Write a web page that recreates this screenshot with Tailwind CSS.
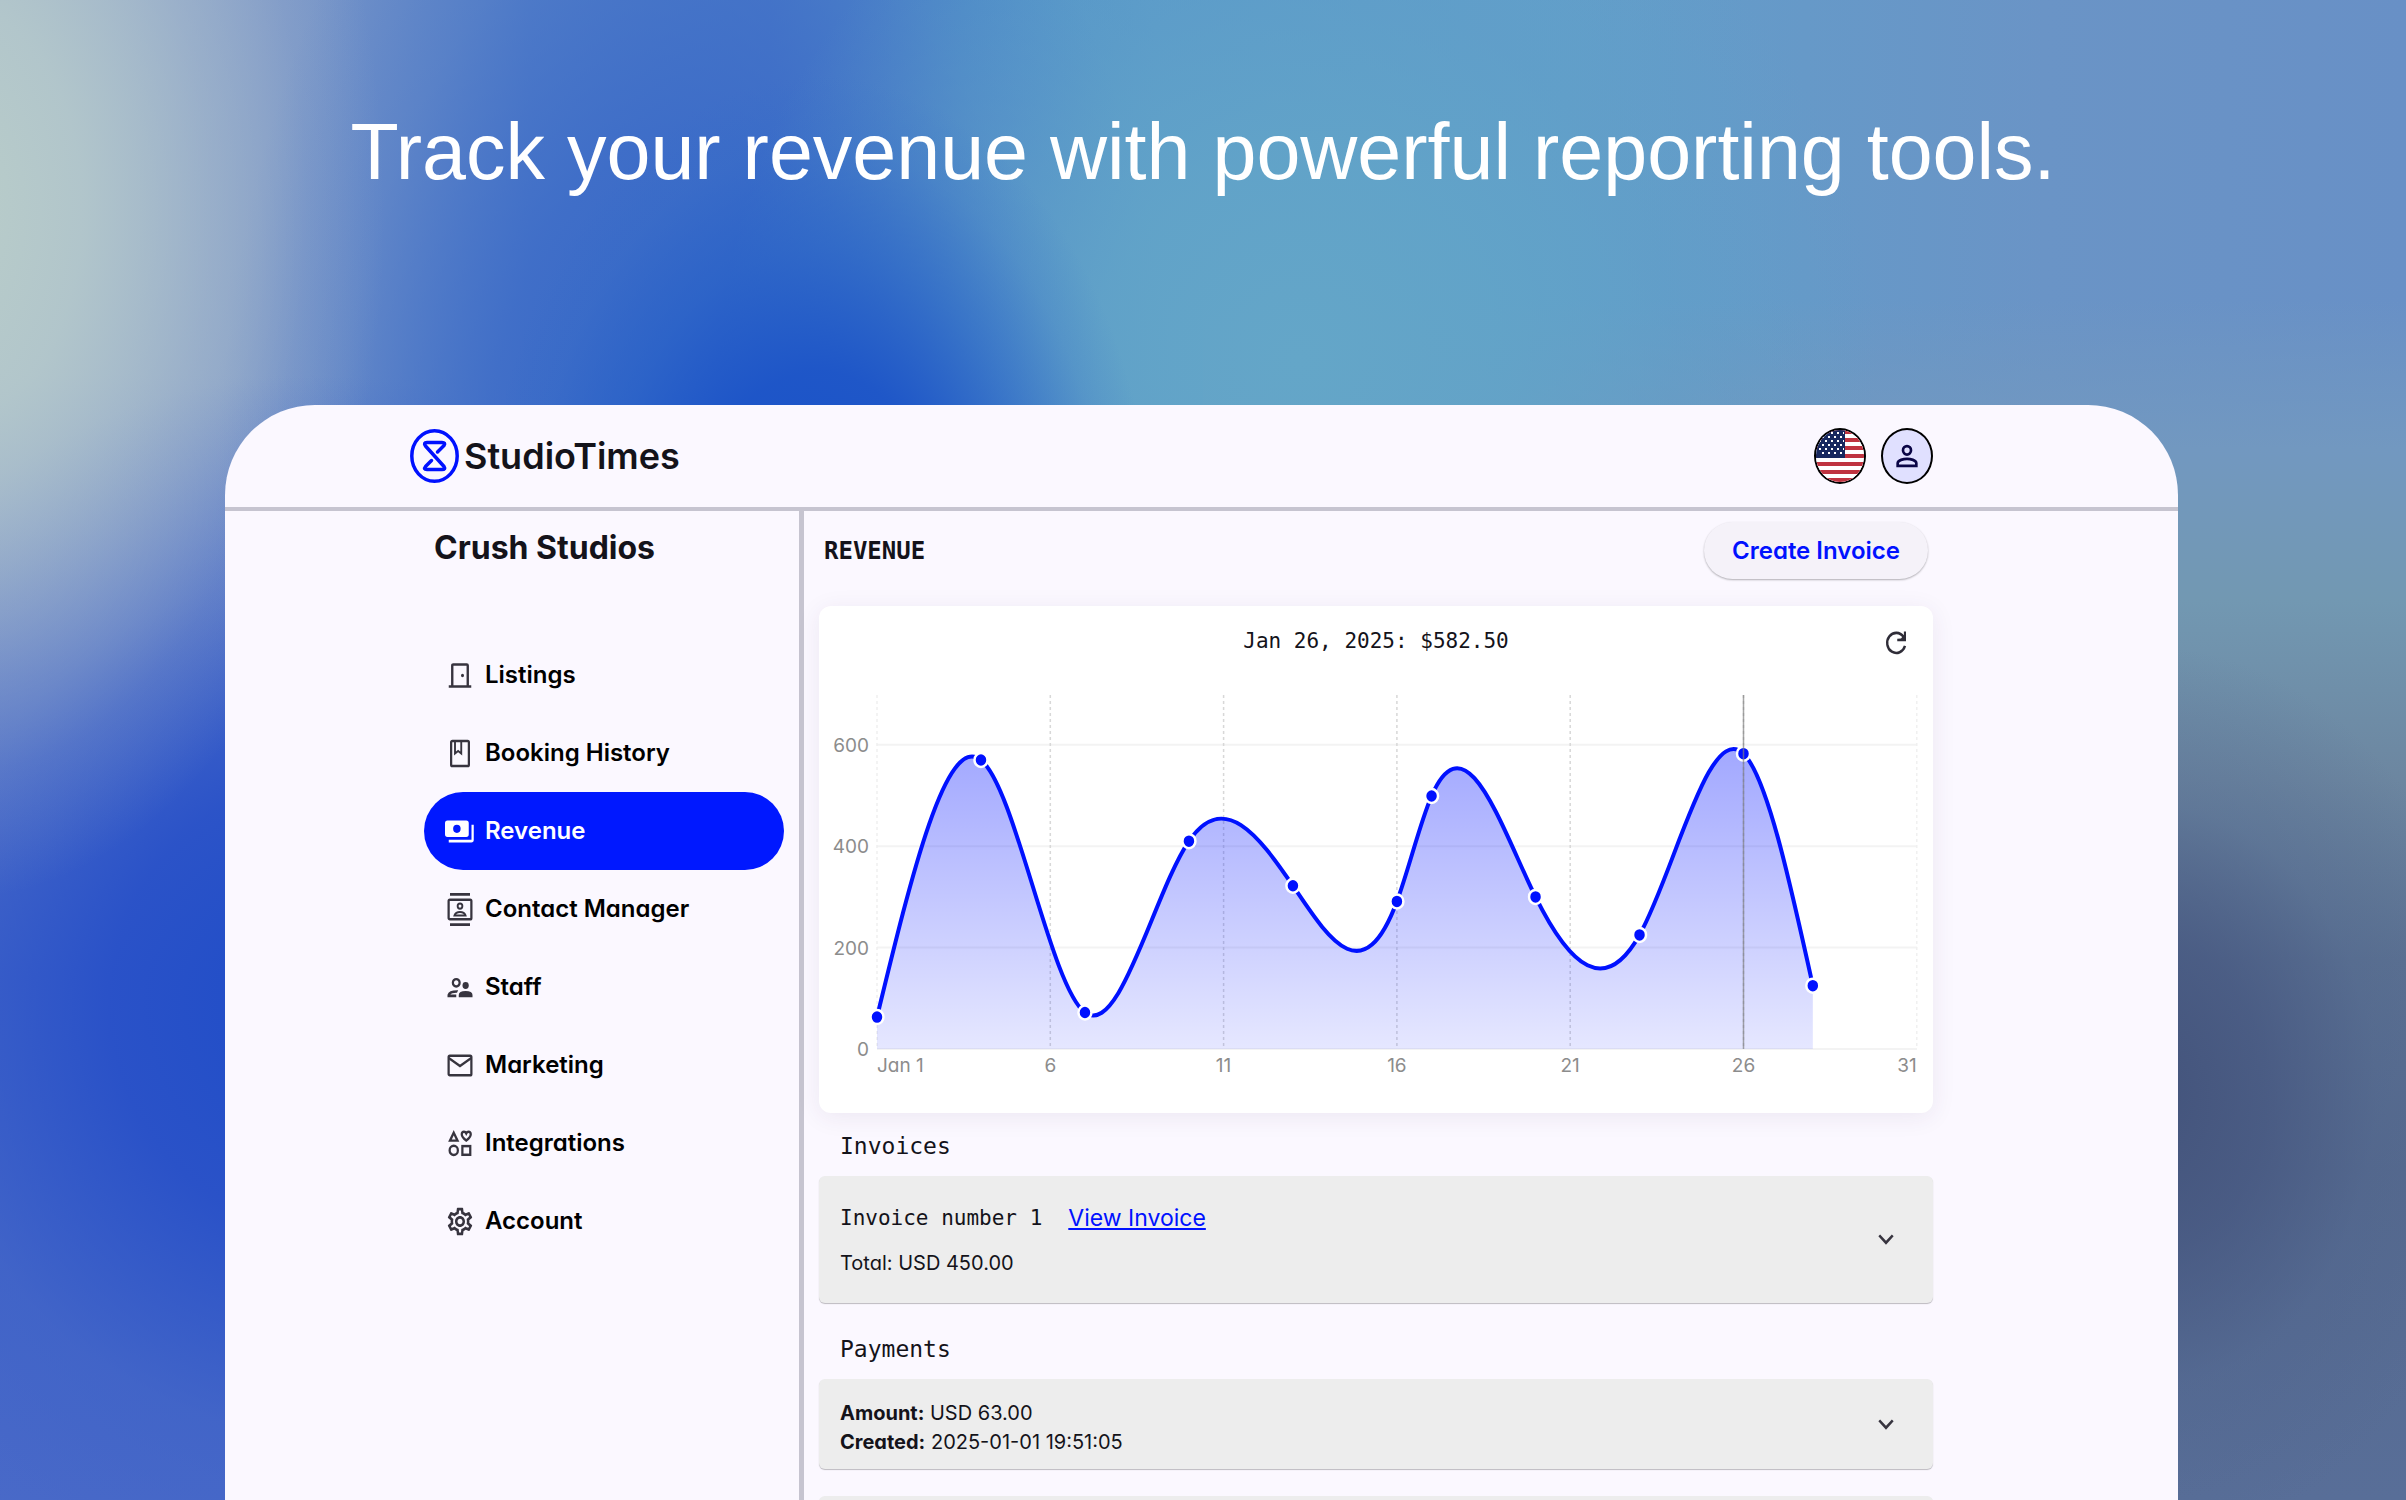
<!DOCTYPE html>
<html lang="en">
<head>
    <meta charset="UTF-8">
    <meta name="viewport" content="width=device-width, initial-scale=1.0">
    <title>StudioTimes - Revenue</title>
    <script src="https://cdn.jsdelivr.net/npm/@tailwindcss/browser@4"></script>
    <style>
        /* soft mesh backdrop, first layer is on top */
        .backdrop {
            background:
                radial-gradient(ellipse 18% 46% at -2% 14%, #b9cdc9 0%, #b5c9cbdd 30%, #a9bccb88 60%, #9fb2cb33 82%, #9fb2cb00 100%),
                radial-gradient(ellipse 15% 30% at 89% 73%, #43537b 0%, #455680bb 35%, #4d628c55 65%, #54688f00 100%),
                radial-gradient(ellipse 14% 33% at 34% 38%, #1850c8 0%, #1c54c8ee 40%, #2560c899 65%, #2f6ac833 86%, #3f72c800 100%),
                radial-gradient(ellipse 24% 38% at 54% 24%, #64a6c8 0%, #62a4c8dd 35%, #60a0c877 65%, #5f9ec800 100%),
                radial-gradient(ellipse 20% 56% at 29% 34%, #3464c8 0%, #3868c8bb 45%, #4472c855 75%, #4a78c800 100%),
                radial-gradient(ellipse 24% 42% at 13% 67%, #1f4dc8 0%, #264fc8dd 35%, #3a60c877 68%, #4a6cc800 100%),
                linear-gradient(to bottom, #6e96c400 20%, #7298c0 30%, #7298b2 40%, #6c86a0 52%, #5c7292 64%, #566a8e 78%, #586e98 100%) right / 50% 100% no-repeat,
                linear-gradient(to bottom, #5a7ac800 25%, #5f7cc8 45%, #4263c8 65%, #4a6ac8 100%) left / 50% 100% no-repeat,
                linear-gradient(to right, #a0b4cb 0%, #7f9ac8 11%, #5580c8 22%, #4a7ac8 32%, #5090c8 40%, #5a9aca 48%, #629eca 65%, #6a94c6 85%, #6890c6 100%);
        }
    </style>
</head>
<body class="backdrop h-screen overflow-hidden flex flex-col font-['Inter',sans-serif] [font-feature-settings:'cv11'] text-[#14131a]">
    <h1 class="pt-[104px] pb-[205px] text-center text-white text-[79px] leading-[96px] font-['Liberation_Sans',sans-serif]">Track your revenue with powerful reporting tools.</h1>

    <!-- App window -->
    <div class="flex-1 min-h-0 ml-[225px] mr-[228px] flex flex-col bg-[#fbf8ff] rounded-t-[90px] overflow-hidden">
        <header class="flex-shrink-0 h-[106px] border-b-4 border-[#c6c4d0] pl-[185px] pr-[245px] flex items-center justify-between">
            <a href="#" class="flex items-center gap-[5px] text-[36px] font-semibold">
                <svg class="w-[49px] h-[54px]" viewBox="0 0 49 54" fill="none" stroke="#0011ff" stroke-width="3.500">
                    <ellipse cx="24.5" cy="27" rx="22.700" ry="25.200"/>
                    <path d="M27.500 23 L34 16.500 Q36 13.500 32 13.500 H17 Q13 13.500 15.500 17 L34 37.500 Q36 40.500 32 40.500 H17 Q13 40.500 15.500 37.500 L21.500 31.500" stroke-linecap="round" stroke-linejoin="round"/>
                </svg>
                StudioTimes
            </a>
            <div class="flex items-center gap-[15px]">
                <button aria-label="Language" class="w-[52px] h-[56px] rounded-[50%] border-2 border-black overflow-hidden">
                    <svg class="w-full h-full" viewBox="0 0 48 52" preserveAspectRatio="none">
                        <rect width="48" height="52" fill="#fff"/>
                        <path d="M0 2H48M0 10H48M0 18H48M0 26H48M0 34H48M0 42H48M0 50H48" stroke="#bf3340" stroke-width="4"/>
                        <rect width="29" height="28" fill="#17285f"/>
                        <g stroke="#fff" stroke-width="2" stroke-dasharray="2 4">
                            <path d="M3 3H28M3 11H28M3 19H28"/>
                            <path d="M6 7H28M6 15H28M6 23H28"/>
                        </g>
                    </svg>
                </button>
                <button aria-label="Profile" class="w-[52px] h-[56px] rounded-[50%] border-2 border-black bg-[#e0e0ff] flex items-center justify-center">
                    <svg class="w-[32px] h-[34px]" viewBox="0 0 24 24" preserveAspectRatio="none" fill="none" stroke="#0a0546" stroke-width="2">
                        <circle cx="12" cy="8" r="3"/>
                        <path d="M5 19V17.200C5 15 9.500 14 12 14S19 15 19 17.200V19Z"/>
                    </svg>
                </button>
            </div>
        </header>

        <div class="flex-1 min-h-0 flex">
            <!-- Sidebar -->
            <aside class="w-[579px] flex-shrink-0 border-r-[5px] border-[#c6c4d0] pt-[13px] pl-[199px] pr-[15px]">
                <h2 class="pl-[10px] text-[32px] leading-[48px] font-bold">Crush Studios</h2>
                <nav class="mt-16 flex flex-col text-[24px] font-semibold text-black">
                    <a href="#" class="h-[78px] rounded-full pl-[21px] flex items-center gap-[10px]">
                        <svg class="w-[30px] h-[33px] text-[#37343f]" viewBox="0 0 24 24" preserveAspectRatio="none" fill="none" stroke="currentColor" stroke-width="1.900">
                            <path d="M3 20H21M5.800 20V4.800Q5.800 4 6.600 4H17.400Q18.200 4 18.200 4.800V20"/>
                            <circle cx="14" cy="12" r="1.200" fill="currentColor" stroke="none"/>
                        </svg>
                        Listings
                    </a>
                    <a href="#" class="h-[78px] rounded-full pl-[21px] flex items-center gap-[10px]">
                        <svg class="w-[30px] h-[33px] text-[#37343f]" viewBox="0 0 24 24" preserveAspectRatio="none" fill="none" stroke="currentColor" stroke-width="1.800">
                            <rect x="4.900" y="2.900" width="14.200" height="18.200" rx="1"/>
                            <path d="M8 3V12L10.500 10.200L13 12V3" stroke-width="1.500"/>
                        </svg>
                        Booking History
                    </a>
                    <a href="#" class="h-[78px] rounded-full pl-[21px] flex items-center gap-[10px] bg-[#0018ff] text-white">
                        <svg class="w-[30px] h-[33px]" viewBox="0 0 24 24" preserveAspectRatio="none" fill="currentColor">
                            <path fill-rule="evenodd" d="M2 4H17Q19 4 19 6V14Q19 16 17 16H2Q0 16 0 14V6Q0 4 2 4ZM9.500 7A3 3 0 1 0 9.500 13A3 3 0 1 0 9.500 7Z"/>
                            <path d="M21.200 7H23V18Q23 20 21 20H3V18H21.200Z"/>
                        </svg>
                        Revenue
                    </a>
                    <a href="#" class="h-[78px] rounded-full pl-[21px] flex items-center gap-[10px]">
                        <svg class="w-[30px] h-[33px] text-[#37343f]" viewBox="0 0 24 24" preserveAspectRatio="none" fill="none" stroke="currentColor" stroke-width="1.800">
                            <path d="M4 1H20M4 23H20" stroke-width="2"/>
                            <rect x="2.900" y="4.900" width="18.200" height="14.200" rx="1"/>
                            <circle cx="12" cy="9.500" r="1.900" stroke-width="1.500"/>
                            <path d="M7.600 16.300Q8.500 13.800 12 13.800T16.400 16.300Z" stroke-width="1.500"/>
                        </svg>
                        Contact Manager
                    </a>
                    <a href="#" class="h-[78px] rounded-full pl-[21px] flex items-center gap-[10px]">
                        <svg class="w-[30px] h-[33px] text-[#37343f]" viewBox="0 0 24 24" preserveAspectRatio="none" fill="currentColor">
                            <path fill="none" stroke="currentColor" stroke-width="1.800" d="M9 5.900A2.700 2.700 0 1 0 9 11.300A2.700 2.700 0 1 0 9 5.900Z"/>
                            <circle cx="16.500" cy="10.500" r="2.500"/>
                            <path d="M11 19V17.500Q11 14.500 16.500 14.500T22 17.500V19Z"/>
                            <path d="M2 19V17.200Q3 13.800 10.500 14L9.600 15.900Q5.500 15.800 4.300 17.100H9V19Z"/>
                        </svg>
                        Staff
                    </a>
                    <a href="#" class="h-[78px] rounded-full pl-[21px] flex items-center gap-[10px]">
                        <svg class="w-[30px] h-[33px] text-[#37343f]" viewBox="0 0 24 24" preserveAspectRatio="none" fill="none" stroke="currentColor" stroke-width="1.800">
                            <rect x="2.900" y="4.900" width="18.200" height="14.200" rx="1"/>
                            <path d="M3 6.500L12 12.400L21 6.500"/>
                        </svg>
                        Marketing
                    </a>
                    <a href="#" class="h-[78px] rounded-full pl-[21px] flex items-center gap-[10px]">
                        <svg class="w-[30px] h-[33px] text-[#37343f]" viewBox="0 0 24 24" preserveAspectRatio="none" fill="none" stroke="currentColor" stroke-width="1.800">
                            <path d="M7 4.200L10 9.900H4Z"/>
                            <circle cx="7" cy="17" r="3.300"/>
                            <rect x="13.900" y="13.900" width="6.300" height="6.300"/>
                            <path d="M17 9.800Q13.400 7.200 13.400 5.200Q13.500 3.400 15.200 3.400Q16.400 3.400 17 4.600Q17.600 3.400 18.800 3.400Q20.500 3.400 20.600 5.200Q20.600 7.200 17 9.800Z"/>
                        </svg>
                        Integrations
                    </a>
                    <a href="#" class="h-[78px] rounded-full pl-[21px] flex items-center gap-[10px]">
                        <svg class="w-[30px] h-[33px] text-[#37343f]" viewBox="0 0 24 24" preserveAspectRatio="none" fill="currentColor">
                            <path d="M19.430 12.980c.040-.320.070-.640.070-.980 0-.340-.030-.660-.070-.980l2.110-1.650c.190-.150.240-.420.120-.640l-2-3.460c-.090-.160-.260-.250-.440-.250-.060 0-.120.010-.170.030l-2.490 1c-.520-.400-1.080-.730-1.690-.980l-.380-2.650C14.460 2.180 14.250 2 14 2h-4c-.250 0-.460.180-.490.420l-.380 2.650c-.610.250-1.170.590-1.690.980l-2.490-1c-.060-.020-.120-.030-.180-.030-.170 0-.340.090-.430.250l-2 3.460c-.130.220-.070.490.120.640l2.110 1.650c-.040.320-.070.650-.070.980 0 .330.030.660.070.980l-2.110 1.650c-.190.150-.240.420-.120.640l2 3.460c.090.160.260.250.440.250.060 0 .120-.010.170-.030l2.490-1c.520.400 1.080.730 1.690.980l.380 2.650c.030.240.240.420.490.420h4c.250 0 .460-.180.490-.420l.380-2.650c.610-.250 1.170-.590 1.690-.980l2.490 1c.060.020.120.030.180.030.170 0 .340-.090.430-.250l2-3.460c.120-.220.070-.490-.120-.640l-2.110-1.650zm-1.980-1.710c.040.310.050.520.050.730 0 .210-.020.430-.050.730l-.140 1.130.890.700 1.080.840-.700 1.210-1.270-.510-1.040-.420-.900.680c-.430.320-.840.560-1.250.730l-1.060.430-.160 1.130-.200 1.350h-1.400l-.190-1.350-.160-1.130-1.060-.430c-.430-.180-.830-.410-1.230-.710l-.910-.700-1.060.430-1.270.510-.700-1.210 1.080-.840.890-.700-.140-1.130c-.030-.310-.050-.540-.050-.740s.020-.430.050-.730l.140-1.130-.890-.700-1.080-.840.700-1.210 1.270.510 1.040.420.900-.680c.430-.320.840-.560 1.250-.730l1.060-.430.160-1.130.200-1.350h1.390l.190 1.350.160 1.130 1.060.430c.430.180.830.410 1.230.710l.910.700 1.060-.430 1.270-.510.700 1.210-1.070.850-.890.700.140 1.130zM12 8c-2.210 0-4 1.790-4 4s1.790 4 4 4 4-1.790 4-4-1.790-4-4-4zm0 6c-1.100 0-2-.900-2-2s.900-2 2-2 2 .900 2 2-.900 2-2 2z"/>
                        </svg>
                        Account
                    </a>
                </nav>
            </aside>

            <!-- Revenue -->
            <main class="flex-1 min-w-0 pt-[11px] pl-[15px] pr-[245px]">
                <div class="h-[57px] px-[5px] flex items-center justify-between">
                    <h2 class="text-[24px] font-bold font-['DejaVu_Sans_Mono',monospace]">REVENUE</h2>
                    <button class="h-[57px] px-7 rounded-full bg-[#f5f2f9] text-[24px] font-semibold text-[#0011ff] shadow-[0_1px_2px_rgba(0,0,0,0.3)]">Create Invoice</button>
                </div>

                <section class="mt-[27px] bg-white rounded-xl shadow-[0_4px_24px_rgba(60,40,90,0.08)]">
                    <div class="h-[68px] px-[22px] pt-1 grid grid-cols-[1fr_auto_1fr] items-center">
                        <span></span>
                        <p class="text-[21px] font-['DejaVu_Sans_Mono',monospace]">Jan 26, 2025: $582.50</p>
                        <button aria-label="Refresh" class="justify-self-end">
                            <svg class="w-[30px] h-[33px]" viewBox="0 0 24 24" preserveAspectRatio="none" fill="none" stroke="#2f2d38" stroke-width="1.900">
                                <path d="M19.200 14.500A7.300 7.300 0 1 1 18 7.800"/>
                                <path d="M20 4V11H13V9.300L16 9L18.300 6.300V4Z" fill="#2f2d38" stroke="none"/>
                            </svg>
                        </button>
                    </div>
                    <svg id="chart" class="block w-full h-auto" viewBox="0 0 1114 439" font-size="19" fill="#8c8c8c">
                        <defs>
                            <linearGradient id="area" gradientUnits="userSpaceOnUse" x1="0" y1="71" x2="0" y2="375">
                                <stop offset="0" stop-color="#0011ff" stop-opacity="0.37"/>
                                <stop offset="1" stop-color="#0011ff" stop-opacity="0.1"/>
                            </linearGradient>
                        </defs>
                    </svg>
                </section>

                <h3 class="mt-[3px] h-[60px] pl-[21px] flex items-center text-[23px] font-['DejaVu_Sans_Mono',monospace]">Invoices</h3>
                <section class="h-[127px] pl-[21px] pr-[32px] flex items-center justify-between rounded-md bg-[#ededed] shadow-[0_1px_1px_rgba(0,0,0,0.25)]">
                    <div class="pt-[2px] flex flex-col gap-[13px] text-[20px] leading-[32px]">
                        <div class="flex gap-[26px]">
                            <span class="text-[21px] font-['DejaVu_Sans_Mono',monospace]">Invoice number 1</span>
                            <a href="#" class="text-[23px] text-[#0011ff] underline">View Invoice</a>
                        </div>
                        <p>Total: USD 450.00</p>
                    </div>
                    <button aria-label="Expand invoice">
                        <svg class="w-[30px] h-[33px]" viewBox="0 0 24 24" preserveAspectRatio="none" fill="none" stroke="#37343f" stroke-width="2"><path d="M6.600 9L12 14.400L17.400 9"/></svg>
                    </button>
                </section>

                <h3 class="mt-4 h-[60px] pl-[21px] flex items-center text-[23px] font-['DejaVu_Sans_Mono',monospace]">Payments</h3>
                <section class="h-[90px] pl-[21px] pr-[32px] flex items-center justify-between rounded-md bg-[#ededed] shadow-[0_1px_1px_rgba(0,0,0,0.25)]">
                    <div class="pt-2 text-[20px] leading-[29px]">
                        <p><b>Amount:</b> USD 63.00</p>
                        <p><b>Created:</b> 2025-01-01 19:51:05</p>
                    </div>
                    <button aria-label="Expand payment">
                        <svg class="w-[30px] h-[33px]" viewBox="0 0 24 24" preserveAspectRatio="none" fill="none" stroke="#37343f" stroke-width="2"><path d="M6.600 9L12 14.400L17.400 9"/></svg>
                    </button>
                </section>
                <section class="mt-[27px] h-[90px] rounded-md bg-[#ededed] shadow-[0_1px_1px_rgba(0,0,0,0.25)]"></section>
            </main>
        </div>
    </div>

    <script>
        // [day of January, revenue in USD]
        const revenue = [[1, 63], [4, 570], [7, 72], [10, 410], [13, 322], [16, 291], [17, 499], [20, 300], [23, 225], [26, 582.5], [28, 125]];
        const plotTop = 21;
        const plotBottom = 375;
        const px = day => 58 + (day - 1) * 34.66;
        const py = usd => plotBottom - usd * 0.507;

        const xs = revenue.map(p => px(p[0]));
        const ys = revenue.map(p => py(p[1]));

        // Natural cubic spline y(x): m holds the second derivative at each point
        const n = xs.length - 1;
        const h = [], s = [];
        for (let i = 0; i < n; i++) {
            h[i] = xs[i + 1] - xs[i];
            s[i] = (ys[i + 1] - ys[i]) / h[i];
        }
        const m = new Array(n + 1).fill(0);
        const c = [0], r = [0];
        for (let i = 1; i < n; i++) {
            const d = 2 * (h[i - 1] + h[i]) - h[i - 1] * c[i - 1];
            c[i] = h[i] / d;
            r[i] = (6 * (s[i] - s[i - 1]) - h[i - 1] * r[i - 1]) / d;
        }
        for (let i = n - 1; i > 0; i--) m[i] = r[i] - c[i] * m[i + 1];

        let line = `M${xs[0]},${ys[0]}`;
        for (let i = 0; i < n; i++) {
            const k0 = s[i] - h[i] * (2 * m[i] + m[i + 1]) / 6;
            const k1 = s[i] + h[i] * (m[i] + 2 * m[i + 1]) / 6;
            const t = h[i] / 3;
            line += `C${xs[i] + t},${ys[i] + k0 * t} ${xs[i + 1] - t},${ys[i + 1] - k1 * t} ${xs[i + 1]},${ys[i + 1]}`;
        }

        let out = '';
        [0, 200, 400, 600].forEach(v => {
            out += `<path d="M58 ${py(v)}H1098" stroke="#f3f3f3" stroke-width="2"/>`;
            out += `<text x="50" y="${py(v) + 7}" text-anchor="end">${v}</text>`;
        });
        [1, 6, 11, 16, 21, 26, 31].forEach(d => {
            const edge = d === 1 || d === 31;
            out += `<path d="M${px(d)} ${plotTop}V${plotBottom}" stroke="${edge ? '#f0f0f0' : '#d8d8d8'}" stroke-width="1.500" stroke-dasharray="3 3"/>`;
            const anchor = d === 1 ? 'start' : d === 31 ? 'end' : 'middle';
            out += `<text x="${px(d)}" y="398" text-anchor="${anchor}">${d === 1 ? 'Jan 1' : d}</text>`;
        });
        out += `<path d="${line}V${plotBottom}H${xs[0]}Z" fill="url(#area)"/>`;
        out += `<path d="${line}" fill="none" stroke="#0011ff" stroke-width="4"/>`;
        xs.forEach((x, i) => {
            out += `<ellipse cx="${x}" cy="${ys[i]}" rx="6.500" ry="7" fill="#0011ff" stroke="#fff" stroke-width="2.500"/>`;
        });
        out += `<path d="M${px(26)} ${plotTop}V${plotBottom}" stroke="#808080" stroke-opacity="0.7" stroke-width="1.500"/>`;
        document.getElementById('chart').insertAdjacentHTML('beforeend', out);
    </script>
</body>
</html>
